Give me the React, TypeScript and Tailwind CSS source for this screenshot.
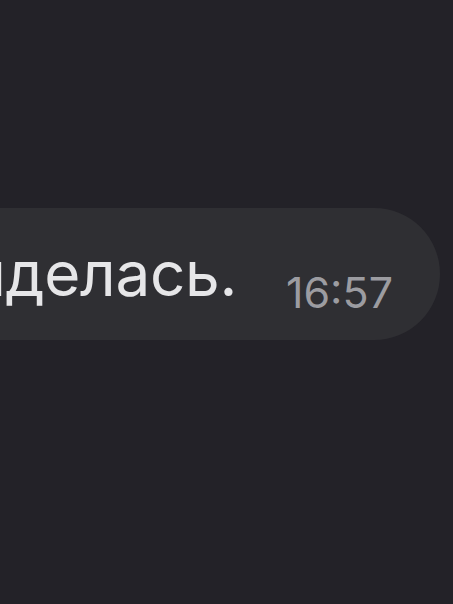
import React from 'react';

const App: React.FC = () => {
    return (
        <div
            className="w-[453px] h-[604px] bg-[#232228] overflow-hidden flex flex-col"
            style={{ fontFamily: 'Inter, "Liberation Sans", sans-serif' }}
        >
            {/* message row */}
            <div className="mt-[208px] flex justify-end pr-[13px]">
                <div className="shrink-0 h-[132px] rounded-[66px] bg-[#2f2f33] flex items-baseline pl-[60px] pr-[47px] pt-[35px]">
                    <span className="text-[62px] leading-[1] text-[#e6e6e8] whitespace-nowrap tracking-[-0.3px]">
                        обиделась.
                    </span>
                    <span className="relative top-[12px] ml-[49px] text-[43px] leading-[1] text-[#9c9ca1] whitespace-nowrap">
                        16:57
                    </span>
                </div>
            </div>
        </div>
    );
};

export default App;
